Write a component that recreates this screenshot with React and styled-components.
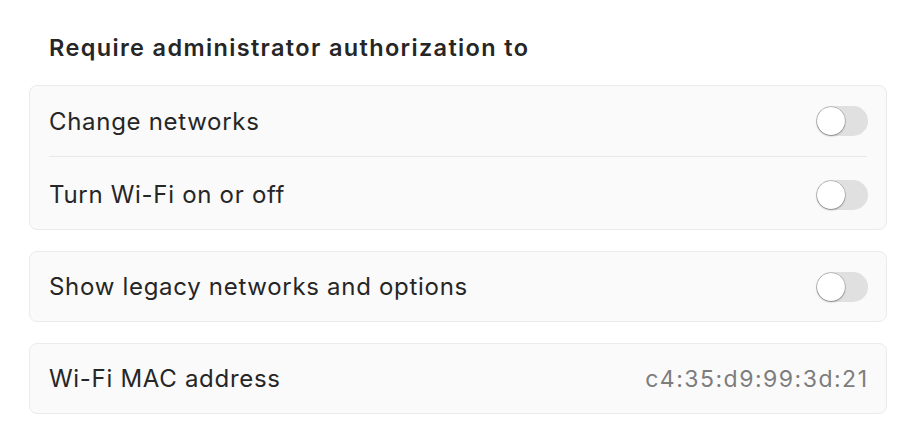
import React from "react";
import styled, { createGlobalStyle } from "styled-components";

const Global = createGlobalStyle`
  html, body { margin: 0; padding: 0; background: #ffffff; }
  body { font-family: Inter, "Noto Sans", "Liberation Sans", sans-serif; color: #262626; -webkit-font-smoothing: antialiased; }
`;

const Page = styled.div`
  width: 906px;
  height: 430px;
  box-sizing: border-box;
  padding: 34px 19px 0 29px;
  display: flex;
  flex-direction: column;
`;

const Heading = styled.h2`
  margin: 0 0 23px 20px;
  font-size: 23.5px;
  line-height: 28px;
  font-weight: 600;
  letter-spacing: 1.35px;
  color: #262626;
`;

const Card = styled.div`
  background: #fafafa;
  border: 1px solid #ebebeb;
  border-radius: 8px;
  padding: 0 19px;
  margin-bottom: 21px;
  display: flex;
  flex-direction: column;
`;

const Row = styled.div`
  height: ${p => p.$h || 69}px;
  padding-top: ${p => p.$shift || 0}px;
  box-sizing: border-box;
  display: flex;
  align-items: center;
  justify-content: space-between;
  border-bottom: ${p => (p.$divider ? "1px solid #e8e8e8" : "none")};
`;

const Label = styled.span`
  font-size: 24px;
  color: #262626;
  letter-spacing: 0.7px;
`;

const Value = styled.span`
  font-size: 23px;
  color: #7d7d7d;
  letter-spacing: 1.5px;
  margin-right: -1.5px;
`;

const Track = styled.div`
  width: 52px;
  height: 30px;
  margin-right: -1px;
  border-radius: 15px;
  background: #e0e0e0;
  box-sizing: border-box;
  padding: 1px;
  display: flex;
  align-items: center;
`;

const Knob = styled.div`
  width: 28px;
  height: 28px;
  border-radius: 50%;
  background: #ffffff;
  box-shadow: 0 0 0 0.5px rgba(0,0,0,0.3), 0 1px 2px rgba(0,0,0,0.3);
`;

const Toggle = () => (
  <Track>
    <Knob />
  </Track>
);

export default function App() {
  return (
    <>
      <Global />
      <Page>
        <Heading>Require administrator authorization to</Heading>
        <Card>
          <Row $divider $h={71}>
            <Label>Change networks</Label>
            <Toggle />
          </Row>
          <Row $h={72} $shift={3}>
            <Label>Turn Wi-Fi on or off</Label>
            <Toggle />
          </Row>
        </Card>
        <Card>
          <Row>
            <Label>Show legacy networks and options</Label>
            <Toggle />
          </Row>
        </Card>
        <Card>
          <Row>
            <Label>Wi-Fi MAC address</Label>
            <Value>c4:35:d9:99:3d:21</Value>
          </Row>
        </Card>
      </Page>
    </>
  );
}
